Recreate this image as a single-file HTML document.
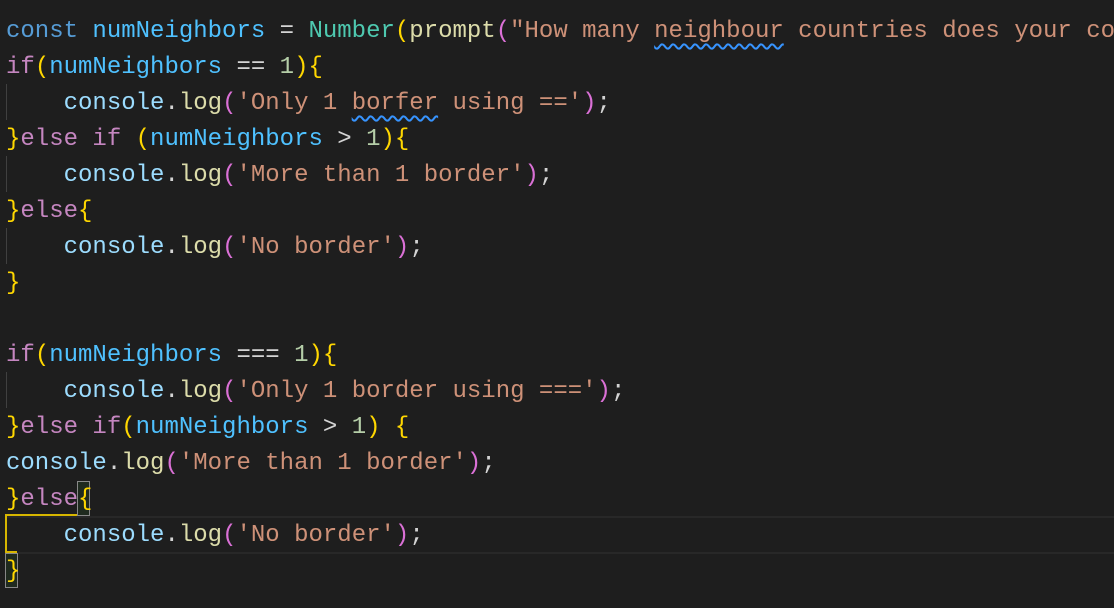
<!DOCTYPE html>
<html><head><style>
html,body{margin:0;padding:0;background:#1e1e1e;width:1114px;height:608px;overflow:hidden;}
.ed{position:absolute;left:0;top:0;width:1114px;height:608px;font-family:"Liberation Mono",monospace;font-size:24px;}
.l{position:absolute;left:6px;height:36px;line-height:36px;white-space:pre;color:#d4d4d4;margin-top:2px;}
.k{color:#569cd6}.v{color:#4fc1ff}.t{color:#4ec9b0}.f{color:#dcdcaa}.s{color:#ce9178}.c{color:#c586c0}
.y{color:#ffd700}.p{color:#da70d6}.n{color:#b5cea8}.o{color:#d4d4d4}.cn{color:#9cdcfe}
.sq{text-decoration:underline wavy #3794ff;text-decoration-thickness:1.5px;text-underline-offset:6px;}
.g{position:absolute;left:6px;width:1px;height:36px;background:#404040;}
</style></head><body><div class="ed">
<div style="position:absolute;left:6px;top:516px;width:1108px;height:34px;border-top:2px solid #282828;border-bottom:2px solid #282828;"></div>
<div class="g" style="top:84px"></div><div class="g" style="top:156px"></div><div class="g" style="top:228px"></div><div class="g" style="top:372px"></div>
<div style="position:absolute;left:5px;top:514px;width:84px;height:2px;background:#d7b600"></div>
<div style="position:absolute;left:5px;top:514px;width:2px;height:39px;background:#d7b600"></div>
<div style="position:absolute;left:5px;top:551px;width:12px;height:2px;background:#d7b600"></div>
<div style="position:absolute;left:77px;top:481px;width:11px;height:33px;border:1px solid #888;background:#1f2a1f"></div>
<div style="position:absolute;left:5px;top:553px;width:11px;height:33px;border:1px solid #888;background:#1f2a1f"></div>
<div class="l" style="top:12px"><span class="k">const</span> <span class="v">numNeighbors</span> = <span class="t">Number</span><span class="y">(</span><span class="f">prompt</span><span class="p">(</span><span class="s">"How many <span class="sq">neighbour</span> countries does your co</span></div>
<div class="l" style="top:48px"><span class="c">if</span><span class="y">(</span><span class="v">numNeighbors</span> == <span class="n">1</span><span class="y">){</span></div>
<div class="l" style="top:84px">    <span class="cn">console</span>.<span class="f">log</span><span class="p">(</span><span class="s">'Only 1 <span class="sq">borfer</span> using =='</span><span class="p">)</span>;</div>
<div class="l" style="top:120px"><span class="y">}</span><span class="c">else if</span> <span class="y">(</span><span class="v">numNeighbors</span> &gt; <span class="n">1</span><span class="y">){</span></div>
<div class="l" style="top:156px">    <span class="cn">console</span>.<span class="f">log</span><span class="p">(</span><span class="s">'More than 1 border'</span><span class="p">)</span>;</div>
<div class="l" style="top:192px"><span class="y">}</span><span class="c">else</span><span class="y">{</span></div>
<div class="l" style="top:228px">    <span class="cn">console</span>.<span class="f">log</span><span class="p">(</span><span class="s">'No border'</span><span class="p">)</span>;</div>
<div class="l" style="top:264px"><span class="y">}</span></div>
<div class="l" style="top:336px"><span class="c">if</span><span class="y">(</span><span class="v">numNeighbors</span> === <span class="n">1</span><span class="y">){</span></div>
<div class="l" style="top:372px">    <span class="cn">console</span>.<span class="f">log</span><span class="p">(</span><span class="s">'Only 1 border using ==='</span><span class="p">)</span>;</div>
<div class="l" style="top:408px"><span class="y">}</span><span class="c">else if</span><span class="y">(</span><span class="v">numNeighbors</span> &gt; <span class="n">1</span><span class="y">)</span> <span class="y">{</span></div>
<div class="l" style="top:444px"><span class="cn">console</span>.<span class="f">log</span><span class="p">(</span><span class="s">'More than 1 border'</span><span class="p">)</span>;</div>
<div class="l" style="top:480px"><span class="y">}</span><span class="c">else</span><span class="y">{</span></div>
<div class="l" style="top:516px">    <span class="cn">console</span>.<span class="f">log</span><span class="p">(</span><span class="s">'No border'</span><span class="p">)</span>;</div>
<div class="l" style="top:552px"><span class="y">}</span></div>
</div></body></html>
